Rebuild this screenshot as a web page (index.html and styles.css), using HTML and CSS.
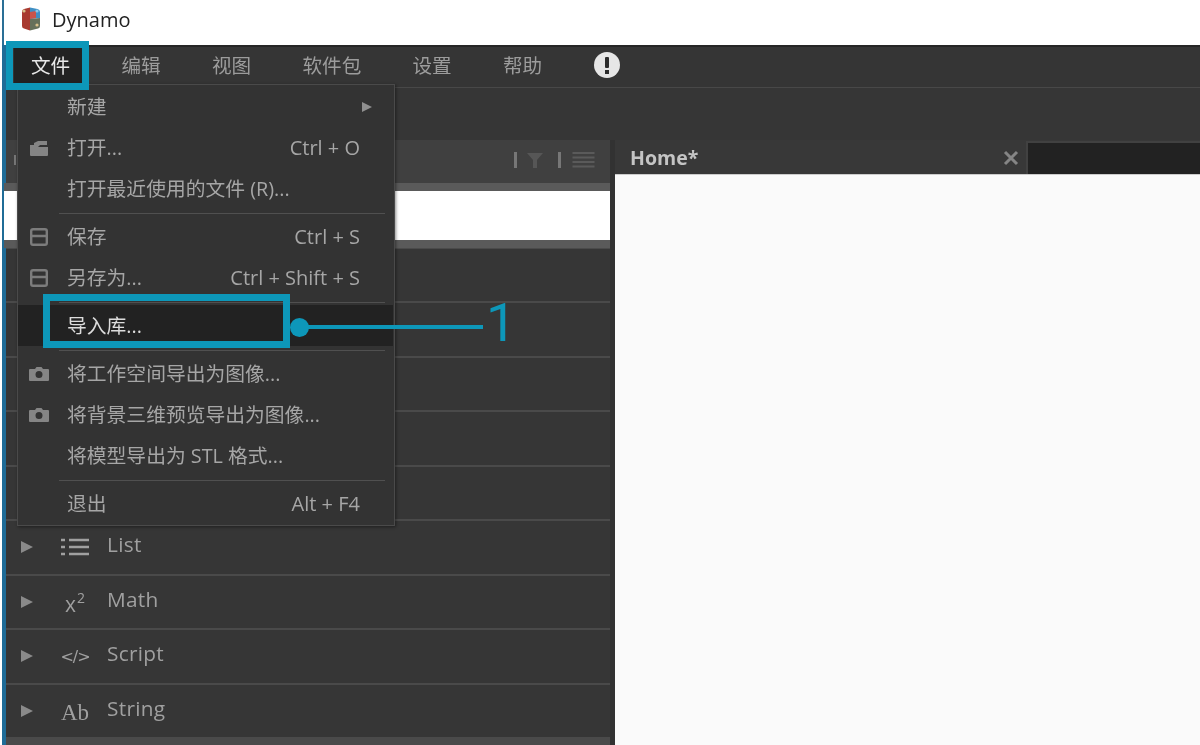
FILE: index.html
```html
<!DOCTYPE html>
<html lang="zh-CN">
<head>
<meta charset="utf-8">
<title>Dynamo</title>
<link rel="stylesheet" href="styles.css">
</head>
<body>
<div class="window">
  <header class="titlebar">
    <svg class="logo" viewBox="0 0 20 24" aria-hidden="true">
      <path d="M3 2 L9 0.5 V23.5 L3 21.5 Q1 21 1 19 V5 Q1 2.500 3 2Z" fill="#a83a30"/>
      <path d="M9 0.500 L16.500 2 Q19 2.500 19 5 V11 L9 12Z" fill="#3f8fc4"/>
      <path d="M9 12 L19 11 V19 Q19 21 17 21.500 L9 23.500Z" fill="#66705a"/>
      <path d="M9 5 L15 4 V11 L9 12Z" fill="#c9544a"/>
      <circle cx="3" cy="4" r="1.600" fill="#d8c08a"/><circle cx="16" cy="4" r="1.600" fill="#8cc6e8"/><circle cx="16" cy="18" r="1.600" fill="#d8c08a"/>
    </svg>
    <span class="app-name">Dynamo</span>
  </header>
  <div class="workspace">
    <nav class="menubar">
      <span class="menu-top is-open">文件</span>
      <span class="menu-top">编辑</span>
      <span class="menu-top">视图</span>
      <span class="menu-top">软件包</span>
      <span class="menu-top">设置</span>
      <span class="menu-top">帮助</span>
      <svg class="alert" viewBox="0 0 26 26" aria-hidden="true"><circle cx="13" cy="13" r="13" fill="#e6e6e6"/><rect x="11" y="5" width="4" height="11" rx="1" fill="#2c2c2c"/><rect x="11" y="18" width="4" height="4" fill="#2c2c2c"/></svg>
    </nav>
    <div class="toolbar"></div>
    <div class="main">
      <aside class="library">
        <div class="lib-head">
          <i class="lib-mark"></i>
          <i class="lib-bar lib-bar-a"></i>
          <svg class="lib-filter" viewBox="0 0 16 16" aria-hidden="true"><path d="M0 1 H16 L10 8 V16 H6 V8Z" fill="#565656"/></svg>
          <i class="lib-bar lib-bar-b"></i>
          <svg class="lib-lines" viewBox="0 0 22 16" aria-hidden="true"><path d="M0 1 H22 M0 5.500 H22 M0 10 H22 M0 14.500 H22" stroke="#5a5a5a" stroke-width="2"/></svg>
        </div>
        <div class="lib-search"></div>
        <div class="lib-rows">
          <div class="lib-row"></div>
          <div class="lib-row"></div>
          <div class="lib-row"></div>
          <div class="lib-row"></div>
          <div class="lib-row"></div>
          <div class="lib-row">
            <i class="tri"></i>
            <span class="cat-icon"><svg class="ico-list" viewBox="0 0 28 18" aria-hidden="true"><path d="M0 2 H4 M0 9 H4 M0 16 H4 M8 2 H28 M8 9 H28 M8 16 H28" stroke="#a0a0a0" stroke-width="2.600"/></svg></span>
            <span class="cat-name">List</span>
          </div>
          <div class="lib-row">
            <i class="tri"></i>
            <span class="cat-icon cat-math">x<sup>2</sup></span>
            <span class="cat-name">Math</span>
          </div>
          <div class="lib-row">
            <i class="tri"></i>
            <span class="cat-icon cat-code">&lt;/&gt;</span>
            <span class="cat-name">Script</span>
          </div>
          <div class="lib-row">
            <i class="tri"></i>
            <span class="cat-icon cat-ab">Ab</span>
            <span class="cat-name">String</span>
          </div>
        </div>
      </aside>
      <section class="canvas-area">
        <div class="tabs">
          <span class="tab-name">Home*</span>
          <svg class="tab-close" viewBox="0 0 16 16" aria-hidden="true"><path d="M2 2 L14 14 M14 2 L2 14" stroke="#858585" stroke-width="3"/></svg>
          <div class="tab-rest"></div>
        </div>
        <div class="canvas"></div>
      </section>
    </div>
  </div>

  <div class="file-menu">
    <div class="item"><span class="item-ic"></span><span class="label">新建</span><i class="sub"></i></div>
    <div class="item"><span class="item-ic"><svg viewBox="0 0 20 16" class="ic" aria-hidden="true"><path d="M1 5 H5 V3 L9 1 H18 V5 H11 L9 7 H19 V15 Q19 16 18 16 H2 Q1 16 1 15Z" fill="#858585"/></svg></span><span class="label">打开...</span><span class="key">Ctrl + O</span></div>
    <div class="item"><span class="item-ic"></span><span class="label">打开最近使用的文件 (R)...</span></div>
    <div class="sep"></div>
    <div class="item"><span class="item-ic"><svg viewBox="0 0 18 18" class="ic ic-save" aria-hidden="true"><path d="M3 1.200 H15 Q16.800 1.200 16.800 3 V15 Q16.800 16.800 15 16.800 H3 Q1.200 16.800 1.200 15 V3 Q1.200 1.200 3 1.200Z M1.200 8 H16.800" fill="none" stroke="#7c7c7c" stroke-width="2.400"/></svg></span><span class="label">保存</span><span class="key">Ctrl + S</span></div>
    <div class="item"><span class="item-ic"><svg viewBox="0 0 18 18" class="ic ic-save" aria-hidden="true"><path d="M3 1.200 H15 Q16.800 1.200 16.800 3 V15 Q16.800 16.800 15 16.800 H3 Q1.200 16.800 1.200 15 V3 Q1.200 1.200 3 1.200Z M1.200 8 H16.800" fill="none" stroke="#7c7c7c" stroke-width="2.400"/></svg></span><span class="label">另存为...</span><span class="key">Ctrl + Shift + S</span></div>
    <div class="sep"></div>
    <div class="item is-hover"><span class="item-ic"></span><span class="label">导入库...</span></div>
    <div class="sep"></div>
    <div class="item"><span class="item-ic"><svg viewBox="0 0 20 14" class="ic" aria-hidden="true"><path fill-rule="evenodd" d="M1 2 H6 L7.500 0 H12.500 L14 2 H19 Q20 2 20 3 V13 Q20 14 19 14 H1 Q0 14 0 13 V3 Q0 2 1 2Z M10 4 A3.500 3.500 0 1 0 10 11 A3.500 3.500 0 1 0 10 4Z" fill="#858585"/></svg></span><span class="label">将工作空间导出为图像...</span></div>
    <div class="item"><span class="item-ic"><svg viewBox="0 0 20 14" class="ic" aria-hidden="true"><path fill-rule="evenodd" d="M1 2 H6 L7.500 0 H12.500 L14 2 H19 Q20 2 20 3 V13 Q20 14 19 14 H1 Q0 14 0 13 V3 Q0 2 1 2Z M10 4 A3.500 3.500 0 1 0 10 11 A3.500 3.500 0 1 0 10 4Z" fill="#858585"/></svg></span><span class="label">将背景三维预览导出为图像...</span></div>
    <div class="item"><span class="item-ic"></span><span class="label">将模型导出为 STL 格式...</span></div>
    <div class="sep"></div>
    <div class="item"><span class="item-ic"></span><span class="label">退出</span><span class="key">Alt + F4</span></div>
  </div>

  <div class="callout callout-file"></div>
  <div class="callout callout-import"></div>
  <div class="leader"></div>
  <div class="leader-dot"></div>
  <div class="leader-num">1</div>
</div>
</body>
</html>
```
FILE: styles.css
```css
* { box-sizing: border-box; }
html, body { margin: 0; height: 100%; }
body {
  background: #fff;
  overflow: hidden;
  font-family: "Open Sans", "Noto Sans CJK SC", sans-serif;
}
.window {
  position: relative;
  width: 1200px;
  height: 745px;
  padding-left: 2px;
  display: flex;
  flex-direction: column;
  overflow: hidden;
  filter: blur(0.4px);
}

/* title bar */
.titlebar {
  flex: 0 0 45px;
  display: flex;
  align-items: center;
  gap: 11px;
  padding: 0 0 7px 17px;
  background: #fff;
  border-left: 2px solid #2a6f96;
}
.logo { width: 20px; height: 24px; }
.app-name { font-size: 20px; color: #222; }

/* workspace */
.workspace {
  flex: 1;
  min-height: 0;
  display: flex;
  flex-direction: column;
  background: #323232;
  border-left: 4px solid #1f6c97;
}
.menubar {
  flex: 0 0 43px;
  display: flex;
  align-items: center;
  gap: 51.3px;
  padding: 0 0 3px 25px;
  background: #353535;
  border-top: 2px solid #262626;
  border-bottom: 1px solid #484848;
}
.menu-top { font-size: 19.6px; color: #9c9c9c; line-height: 1; }
.menu-top.is-open {
  color: #e8e8e8;
  background: #222;
  padding: 8px 17px;
  margin: -8px -17px;
}
.alert { width: 26px; height: 26px; margin-top: -1px; }
.toolbar { flex: 0 0 52px; background: #363636; }

.main { flex: 1; min-height: 0; display: flex; }

/* library */
.library {
  width: 604px;
  display: flex;
  flex-direction: column;
  background: #363636;
}
.lib-head {
  flex: 0 0 43px;
  display: flex;
  align-items: center;
  padding: 0 15px 4px 8px;
  background: #404040;
}
.lib-mark { width: 2px; height: 10px; background: #777; margin-right: auto; }
.lib-bar { width: 3px; height: 16px; background: #777; }
.lib-filter { width: 16px; height: 16px; margin: 0 15px 0 10px; }
.lib-lines { width: 23px; height: 16px; margin-left: 11px; }
.lib-search {
  flex: 0 0 65px;
  margin-left: -2px;
  background: #fff;
  border-top: 8px solid #5a5a5a;
  border-bottom: 8px solid #5a5a5a;
}
.lib-rows { flex: 1; min-height: 0; padding-top: 0.5px; background: #4a4a4a; }
.lib-row {
  height: 54.5px;
  display: flex;
  align-items: center;
  padding-left: 15px;
  background: #363636;
  border-bottom: 2px solid #4a4a4a;
}
.tri {
  width: 0; height: 0;
  border-left: 12px solid #8a8a8a;
  border-top: 6.5px solid transparent;
  border-bottom: 6.5px solid transparent;
}
.cat-icon {
  width: 28px;
  margin: 0 18px 0 28px;
  display: flex;
  justify-content: center;
  align-items: baseline;
  color: #a0a0a0;
  font-size: 19px;
  line-height: 1;
}
.ico-list { width: 28px; height: 18px; }
.cat-math { font-size: 21px; padding-top: 6px; }
.cat-math sup { font-size: 14px; line-height: 1; position: relative; top: -9px; margin-left: 1px; vertical-align: baseline; }
.cat-code { font-size: 16px; padding-top: 2px; font-family: "DejaVu Sans", sans-serif; letter-spacing: -1px; }
.cat-ab { font-family: "Liberation Serif", serif; font-size: 23px; padding-top: 3px; }
.cat-name { font-size: 20.8px; color: #a0a0a0; line-height: 1; margin-top: -5px; letter-spacing: .3px; }

/* canvas */
.canvas-area {
  flex: 1;
  min-width: 0;
  margin-left: 5px;
  display: flex;
  flex-direction: column;
}
.tabs {
  flex: 0 0 34px;
  display: flex;
  align-items: center;
  padding-left: 15px;
  background: #383838;
}
.tab-name { font-size: 19.5px; font-weight: 700; color: #c4c4c4; line-height: 1; margin-top: 1px; }
.tab-close { width: 16px; height: 16px; margin-left: auto; margin-top: 2px; }
.tab-rest {
  width: 174px;
  height: 33px;
  margin-left: 7px;
  align-self: flex-end;
  background: #222;
  border: 2px solid #414141;
  border-right: 0;
  border-bottom: 0;
}
.canvas { flex: 1; background: #fafafa; border-top: 1px solid #ccc; }

/* file menu */
.file-menu {
  position: absolute;
  left: 17px;
  top: 84px;
  width: 378px;
  height: 442px;
  padding-top: 1px;
  background: #333;
  border: 1px solid #4a4a4a;
  box-shadow: 1px 1px 3px rgba(0, 0, 0, .45);
}
.item {
  height: 41px;
  display: flex;
  align-items: center;
  padding-right: 34px;
  color: #a6a6a6;
  font-size: 19.8px;
  line-height: 1;
}
.item.is-hover { background: #222; color: #dcdcdc; margin-right: 1px; }
.item-ic { flex: 0 0 49px; display: flex; justify-content: flex-end; padding-right: 18px; }
.ic { width: 20px; height: 16px; display: block; }
.ic-save { width: 18px; height: 18px; margin-right: 1px; }
.label { flex: 1; }
.key { color: #a6a6a6; font-size: 20px; }
.sub {
  width: 0; height: 0;
  margin-right: -12px;
  border-left: 10px solid #8f8f8f;
  border-top: 5.5px solid transparent;
  border-bottom: 5.5px solid transparent;
}
.sep { height: 7px; padding: 4px 9px 2px 41px; }
.sep::before { content: ""; display: block; height: 1px; background: #505050; }

/* annotation overlay */
.callout { position: absolute; border: 7px solid #0d97b9; }
.callout-file { left: 6px; top: 41px; width: 83px; height: 49px; }
.callout-import { left: 43px; top: 294px; width: 247px; height: 54px; }
.leader { position: absolute; left: 299px; top: 325px; width: 184px; height: 4px; background: #0d97b9; }
.leader-dot { position: absolute; left: 290px; top: 318px; width: 19px; height: 19px; border-radius: 50%; background: #0d97b9; }
.leader-num {
  position: absolute;
  left: 486px;
  top: 291px;
  font-family: "Roboto", sans-serif;
  font-weight: 400;
  font-size: 54px;
  line-height: 64px;
  color: #0d97b9;
}
```
